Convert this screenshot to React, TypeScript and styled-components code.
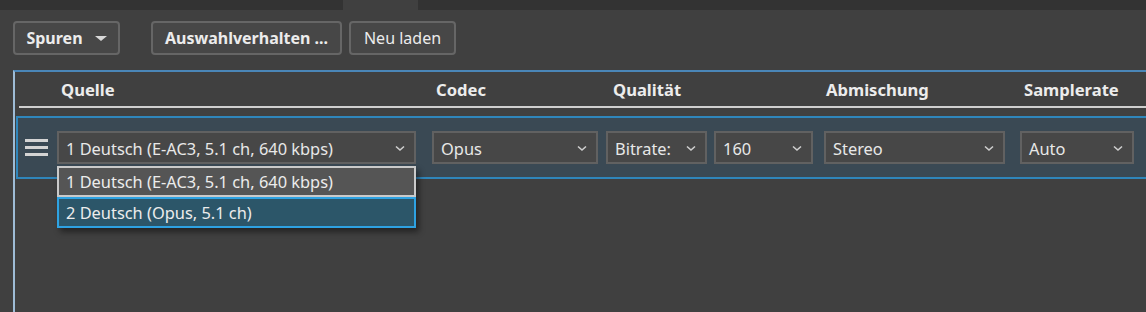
import React from "react";
import styled, { createGlobalStyle } from "styled-components";

const Global = createGlobalStyle`
  html, body { margin: 0; padding: 0; background: #404040; }
  body { font-family: "Noto Sans", "Open Sans", sans-serif; color: #e6e6e6; overflow: hidden; }
  * { box-sizing: border-box; }
`;

const Page = styled.div`
  width: 1146px;
  height: 312px;
  background: #404040;
  display: flex;
  flex-direction: column;
  overflow: hidden;
`;

const TopStrip = styled.div`
  height: 10px;
  display: flex;
  background: #333333;
`;

const TabGap = styled.div`
  margin-left: 343px;
  width: 75px;
  background: #404040;
`;

const Toolbar = styled.div`
  display: flex;
  align-items: center;
  padding: 11px 0 0 13px;
  height: 44px;
`;

const Button = styled.button<{ $bold?: boolean; $ml?: number; $w: number }>`
  height: 34px;
  width: ${(p) => p.$w}px;
  margin-left: ${(p) => p.$ml ?? 0}px;
  background: #474747;
  border: 2px solid #666666;
  border-radius: 4px;
  color: #ececec;
  font-family: "Noto Sans", sans-serif;
  font-size: 16px;
  font-weight: ${(p) => (p.$bold ? 700 : 400)};
  display: flex;
  align-items: center;
  justify-content: center;
  gap: 12px;
  padding: 0;
`;

const Caret = styled.span`
  width: 0;
  height: 0;
  border-left: 6px solid transparent;
  border-right: 6px solid transparent;
  border-top: 5px solid #d8d8d8;
  margin-top: 1px;
`;

const Panel = styled.div`
  margin: 16px 0 0 13px;
  flex: 1;
  border-top: 2px solid #4a86b8;
  border-left: 2px solid #9ebcd6;
  position: relative;
`;

const HeaderRow = styled.div`
  display: flex;
  margin-left: 4px;
  height: 36px;
  border-bottom: 2px solid #cfcfcf;
  align-items: center;
`;

const HeadCell = styled.div<{ $w: number; $pl?: number }>`
  width: ${(p) => p.$w}px;
  flex: none;
  padding-left: ${(p) => p.$pl ?? 4}px;
  font-weight: 700;
  font-size: 16.6px;
  color: #ececec;
  white-space: nowrap;
`;

const TrackRow = styled.div`
  margin: 8px 0 0 1px;
  height: 63px;
  background: #3a4954;
  border-top: 2px solid #2f86bb;
  border-bottom: 2px solid #2f86bb;
  border-left: 2px solid #2f86bb;
  display: flex;
  align-items: center;
  padding-left: 7px;
  position: relative;
`;

const Handle = styled.div`
  width: 23px;
  display: flex;
  flex-direction: column;
  gap: 4px;
  margin-right: 9px;
  & > span {
    height: 3px;
    background: #d4d4d4;
  }
`;

const Select = styled.div<{ $w: number; $ml?: number }>`
  width: ${(p) => p.$w}px;
  margin-left: ${(p) => p.$ml ?? 0}px;
  height: 33px;
  flex: none;
  background: #474747;
  border: 2px solid #616161;
  display: flex;
  align-items: center;
  justify-content: space-between;
  padding: 1px 9px 0 7px;
  font-size: 16.4px;
  color: #e8e8e8;
  white-space: nowrap;
`;

const Chevron = () => (
  <svg width="10" height="7" viewBox="0 0 10 7">
    <path d="M1 1.5 L5 5 L9 1.5" fill="none" stroke="#cfcfcf" strokeWidth="1.6" />
  </svg>
);

const Popup = styled.div`
  position: absolute;
  left: 39px;
  top: 48px;
  width: 359px;
  background: #484848;
  box-shadow: 3px 4px 6px rgba(0, 0, 0, 0.45);
  z-index: 2;
`;

const Option = styled.div<{ $active?: boolean }>`
  height: 31px;
  display: flex;
  align-items: center;
  padding-left: 7px;
  font-size: 16.4px;
  color: #ececec;
  background: ${(p) => (p.$active ? "#2c5669" : "#555555")};
  border: 2px solid ${(p) => (p.$active ? "#2ea2e2" : "#cacaca")};
  white-space: nowrap;
`;

export default function App() {
  return (
    <Page>
      <Global />
      <TopStrip>
        <TabGap />
      </TopStrip>
      <Toolbar>
        <Button $bold $w={107}>
          Spuren <Caret />
        </Button>
        <Button $bold $w={191} $ml={31}>
          Auswahlverhalten ...
        </Button>
        <Button $w={107} $ml={7}>
          Neu laden
        </Button>
      </Toolbar>
      <Panel>
        <HeaderRow>
          <HeadCell $w={38} />
          <HeadCell $w={375}>Quelle</HeadCell>
          <HeadCell $w={174}>Codec</HeadCell>
          <HeadCell $w={218} $pl={7}>Qualität</HeadCell>
          <HeadCell $w={196} $pl={2}>Abmischung</HeadCell>
          <HeadCell $w={130}>Samplerate</HeadCell>
        </HeaderRow>
        <TrackRow>
          <Handle>
            <span />
            <span />
            <span />
          </Handle>
          <Select $w={359}>
            1 Deutsch (E-AC3, 5.1 ch, 640 kbps) <Chevron />
          </Select>
          <Select $w={166} $ml={16}>
            Opus <Chevron />
          </Select>
          <Select $w={101} $ml={8}>
            Bitrate: <Chevron />
          </Select>
          <Select $w={99} $ml={7}>
            160 <Chevron />
          </Select>
          <Select $w={181} $ml={11}>
            Stereo <Chevron />
          </Select>
          <Select $w={114} $ml={15}>
            Auto <Chevron />
          </Select>
          <Popup>
            <Option>1 Deutsch (E-AC3, 5.1 ch, 640 kbps)</Option>
            <Option $active>2 Deutsch (Opus, 5.1 ch)</Option>
          </Popup>
        </TrackRow>
      </Panel>
    </Page>
  );
}
